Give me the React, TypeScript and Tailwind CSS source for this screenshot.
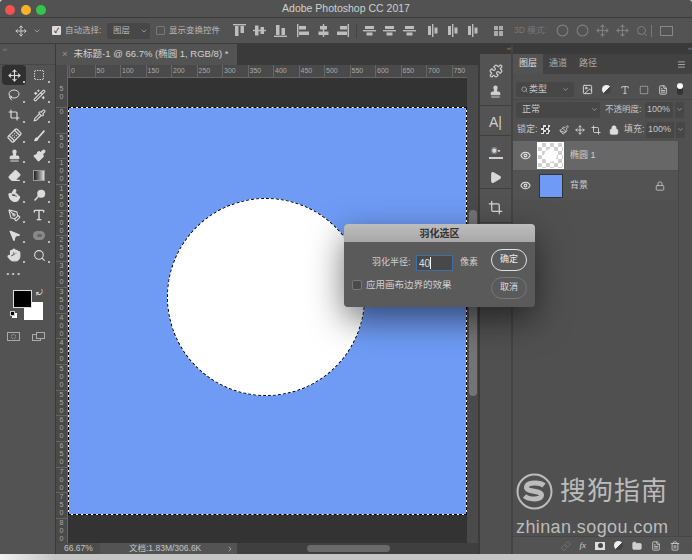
import {
  Bandage, ChevronDown, ChevronRight, Circle, Crop, Eraser, Eye, FileText, Folder, Hand, Image, Lasso, Link,
  Lock, Menu, MousePointer2, Move, Paintbrush, PenTool, Pipette, Play, Pointer, Puzzle, Search, SquareDashed, Stamp, Trash2, Type, Wand2,
} from 'lucide-react'
import type { ReactNode } from 'react'

const hTicks = ['0', '50', '100', '150', '200', '250', '300', '350', '400', '450', '500', '550', '600', '650', '700', '750']
const vTicks = ['0', '50', '100', '150', '200', '250', '300', '350', '400', '450', '500', '550', '600', '650', '700', '750', '800']

function AlignIcon({ kind, rotate, className = '' }: { kind: 'top' | 'mid' | 'bottom' | 'dist'; rotate?: boolean; className?: string }) {
  return (
    <svg width="13" height="13" viewBox="0 0 13 13" fill="#bdbdbd" className={`shrink-0 ${rotate ? '-rotate-90' : ''} ${className}`}>
      {kind === 'top' && (
        <>
          <rect x="0" y="0" width="13" height="1.4" />
          <rect x="2" y="2" width="3.5" height="10" />
          <rect x="7.5" y="2" width="3.5" height="7" />
        </>
      )}
      {kind === 'mid' && (
        <>
          <rect x="0" y="5.8" width="13" height="1.4" />
          <rect x="2" y="1.5" width="3.5" height="10" />
          <rect x="7.5" y="3" width="3.5" height="7" />
        </>
      )}
      {kind === 'bottom' && (
        <>
          <rect x="0" y="11.6" width="13" height="1.4" />
          <rect x="2" y="1" width="3.5" height="10" />
          <rect x="7.5" y="4" width="3.5" height="7" />
        </>
      )}
      {kind === 'dist' && (
        <>
          <rect x="0" y="6" width="13" height="1.4" />
          <rect x="2" y="2" width="9" height="3" />
          <rect x="3.5" y="8.5" width="6" height="3" />
        </>
      )}
    </svg>
  )
}

function Tool({ children, active }: { children: ReactNode; active?: boolean }) {
  return (
    <div className={`relative flex h-[20px] w-[24px] items-center justify-center ${active ? 'rounded-sm bg-[#303030]' : ''}`}>
      {children}
      <span className="absolute right-[1px] bottom-[2px] h-[2px] w-[2px] bg-[#bbb]" />
    </div>
  )
}

function BrushGlyph() {
  return (
    <svg width="13" height="13" viewBox="0 0 13 13" fill="#dcdcdc">
      <path d="M1 12 C1.5 9.5 3 8 4.5 8.2 L10.8 1 L12 2.2 L5.6 9.4 C5.6 11 3.5 12.6 1 12Z" />
    </svg>
  )
}

function DodgeGlyph() {
  return (
    <svg width="13" height="13" viewBox="0 0 13 13" fill="#dcdcdc">
      <circle cx="8.2" cy="4.8" r="4" />
      <path d="M5.4 7.2 L1.6 11.6" stroke="#dcdcdc" strokeWidth="1.6" />
    </svg>
  )
}

function Toggle() {
  return <span className="h-[9px] w-[9px] shrink-0 rounded-full bg-gradient-to-br from-[#eee] from-50% to-[#444] to-50%" />
}

function LayerRow({ name, selected, blue }: { name: string; selected?: boolean; blue?: boolean }) {
  return (
    <div className={`mb-[1px] flex h-[29px] items-center ${selected ? 'bg-[#676767]' : 'bg-[#535353]'}`}>
      <div className="flex w-[24px] shrink-0 justify-center">
        <Eye size={11} className="text-[#e0e0e0]" strokeWidth={2.4} />
      </div>
      {blue ? (
        <div className="mr-[7px] ml-[2px] h-[24px] w-[24px] border border-[#333] bg-[#6f9bf5]" />
      ) : (
        <div className="mr-[6px] flex h-[27px] w-[27px] items-center justify-center border border-white bg-[repeating-conic-gradient(#cfcfcf_0_25%,#fff_0_50%)] bg-[length:8px_8px]">
          <div className="h-[13px] w-[13px] rounded-full bg-white" />
        </div>
      )}
      <span className="flex-1 text-[9px] text-[#cfcfcf]">{name}</span>
      {blue && <Lock size={10} className="mr-[13px] text-[#c8c8c8]" />}
    </div>
  )
}

export default function App() {
  return (
    <div className="relative flex h-[560px] w-[692px] flex-col overflow-hidden bg-[#cfcfcf] font-['Liberation_Sans','Noto_Sans_CJK_SC',sans-serif]">
      <div className="flex h-[554px] shrink-0 flex-col overflow-hidden rounded-t-[4px] bg-[#535353]">
        {/* title bar */}
        <div className="relative flex h-[18px] shrink-0 items-center justify-center border-b border-[#3a3a3a] bg-[#525252] text-[10.5px] text-[#d0d0d0]">
          <div className="absolute top-[5px] left-[5px] flex gap-[5.5px]">
            <span className="h-[10px] w-[10px] rounded-full bg-[#f0524f]" />
            <span className="h-[10px] w-[10px] rounded-full bg-[#f5b32a]" />
            <span className="h-[10px] w-[10px] rounded-full bg-[#33c648]" />
          </div>
          Adobe Photoshop CC 2017
        </div>

        {/* options bar */}
        <div className="flex h-[26px] shrink-0 items-center border-b border-[#3c3c3c] bg-[#535353] pl-[15px] text-[8.5px] text-[#b9b9b9]">
          <Move size={12} className="text-[#c8c8c8]" />
          <ChevronDown size={8} className="ml-[6px]" />
          <span className="ml-[11px] flex h-[9px] w-[9px] items-center justify-center rounded-[1px] bg-[#dcdcdc] text-[7px] leading-none font-bold text-[#333]">✓</span>
          <span className="ml-[4px] w-[41px] shrink-0 whitespace-nowrap">自动选择:</span>
          <div className="ml-[1px] flex h-[16px] w-[43px] shrink-0 items-center justify-between rounded-[2px] bg-[#474747] pr-[2px] pl-[6px]">
            图层
            <ChevronDown size={8} />
          </div>
          <span className="ml-[6px] h-[9px] w-[9px] shrink-0 rounded-[1px] border border-[#777]" />
          <span className="ml-[4px] w-[54px] shrink-0 whitespace-nowrap">显示变换控件</span>
          <div className="ml-[10px] flex items-center">
            <AlignIcon kind="top" />
            <AlignIcon kind="mid" className="ml-[7px]" />
            <AlignIcon kind="bottom" className="ml-[8px]" />
            <AlignIcon kind="top" rotate className="ml-[10px]" />
            <AlignIcon kind="mid" rotate className="ml-[7px]" />
            <AlignIcon kind="bottom" rotate className="ml-[6px]" />
            <span className="ml-[7px] h-[14px] w-px bg-[#444]" />
            <AlignIcon kind="dist" className="ml-[6px]" />
            <AlignIcon kind="dist" className="ml-[7px]" />
            <AlignIcon kind="dist" className="ml-[7px]" />
            <AlignIcon kind="dist" rotate className="ml-[10px]" />
            <AlignIcon kind="dist" rotate className="ml-[7px]" />
            <AlignIcon kind="dist" rotate className="ml-[7px]" />
            <span className="ml-[15px] grid h-[10px] w-[9px] grid-cols-2 gap-[1px]">
              <i className="bg-[#aaa]" /><i className="bg-[#aaa]" /><i className="bg-[#aaa]" /><i className="bg-[#aaa]" />
            </span>
          </div>
          <span className="ml-[11px] shrink-0 text-[#777]">3D 模式:</span>
          <div className="ml-[9px] flex items-center gap-[7px] text-[#808080]">
            <Circle size={13} />
            <Circle size={13} />
            <Move size={13} />
            <Move size={13} />
            <Search size={12} />
          </div>
          <span className="ml-[3px] h-[12px] w-px bg-[#777]" />
          <span className="ml-[8px] h-[10px] w-[13px] shrink-0 border border-[#888]" />
        </div>

        <div className="flex min-h-0 flex-1">
          {/* toolbar */}
          <div className="flex w-[56px] shrink-0 flex-col border-r border-[#3a3a3a] bg-[#535353]">
            <div className="h-[21px] border-b border-[#474747] pt-[1px] pl-[3px] text-[6px] text-[#999]">‹‹</div>
            <div className="ml-[2px] grid grid-cols-[24px_24px] gap-x-[1px] text-[#dcdcdc]">
              <Tool active><Move size={13} /></Tool>
              <Tool><SquareDashed size={12} /></Tool>
              <Tool><Lasso size={12} /></Tool>
              <Tool><Wand2 size={13} /></Tool>
              <Tool><Crop size={12} strokeWidth={2.4} /></Tool>
              <Tool><Pipette size={13} /></Tool>
              <Tool><Bandage size={15} className="-rotate-45" /></Tool>
              <Tool><BrushGlyph /></Tool>
              <Tool><Stamp size={13} fill="#dcdcdc" /></Tool>
              <Tool><Paintbrush size={13} fill="#dcdcdc" /></Tool>
              <Tool><Eraser size={13} fill="#dcdcdc" /></Tool>
              <Tool><span className="h-[11px] w-[12px] border border-[#999] bg-gradient-to-r from-[#222] to-[#ddd]" /></Tool>
              <Tool><Pointer size={13} fill="#dcdcdc" className="rotate-[30deg]" /></Tool>
              <Tool><DodgeGlyph /></Tool>
              <Tool><PenTool size={13} /></Tool>
              <Tool><Type size={14} strokeWidth={2.4} /></Tool>
              <Tool><MousePointer2 size={13} fill="#dcdcdc" /></Tool>
              <Tool><span className="flex h-[9px] w-[12px] items-center justify-center rounded-full bg-[#8a8a8a]"><i className="h-[3px] w-[5px] rounded-full bg-[#666]" /></span></Tool>
              <Tool><Hand size={14} fill="#dcdcdc" /></Tool>
              <Tool><Search size={13} /></Tool>
            </div>
            <div className="-mt-[2px] ml-[6px] flex h-[20px] items-center text-[13px] leading-none font-bold tracking-[1px] text-[#ccc]">···</div>
            <div className="relative mt-[7px] ml-[13px] h-[30px] w-[30px]">
              <div className="absolute right-0 bottom-0 h-[18px] w-[19px] bg-white" />
              <div className="absolute top-0 left-0 h-[18px] w-[19px] border border-[#ddd] bg-black" />
              <span className="absolute top-[-3px] right-[0px] text-[8px] text-[#ddd]">⤾</span>
              <div className="absolute bottom-[2px] left-[-1px] h-[5px] w-[5px] bg-white" />
              <div className="absolute bottom-[4px] left-[-3px] h-[5px] w-[5px] border border-[#ccc] bg-black" />
            </div>
            <div className="mt-[12px] ml-[7px] flex items-center gap-[12px]">
              <div className="flex h-[9px] w-[13px] items-center justify-center border border-[#aaa]">
                <span className="h-[5px] w-[5px] rounded-full border border-dotted border-[#aaa]" />
              </div>
              <div className="relative h-[9px] w-[13px]">
                <span className="absolute top-[2px] left-0 h-[7px] w-[9px] border border-[#aaa]" />
                <span className="absolute top-0 right-0 h-[7px] w-[9px] border border-[#aaa] bg-[#535353]" />
              </div>
            </div>
          </div>

          {/* document column */}
          <div className="flex w-[424px] shrink-0 flex-col border-r-2 border-[#3a3a3a] bg-[#3b3b3b]">
            <div className="flex h-[21px] shrink-0 items-end bg-[#3a3a3a]">
              <div className="flex h-[21px] w-[181px] items-center bg-[#535353] pl-[6px] text-[9.5px] whitespace-nowrap text-[#d0d0d0]">
                <span className="mr-[6px] text-[#999]">×</span>
                未标题-1 @ 66.7% (椭圆 1, RGB/8) *
              </div>
            </div>
            <div className="flex h-[13px] shrink-0 bg-[#4a4a4a]">
              <div className="w-[12px] shrink-0 border-r border-[#666]" />
              <div className="flex w-[399px] overflow-hidden border-b border-[#666] pl-[1px]">
                {hTicks.map((t) => (
                  <span key={t} className="w-[25.5px] shrink-0 border-l border-[#666] pl-[1px] text-[7px] leading-[12px] text-[#a9a9a9]">{t}</span>
                ))}
              </div>
              <div className="flex-1 bg-[#4a4a4a]" />
            </div>

            <div className="flex min-h-0 flex-1">
              <div className="flex w-[12px] shrink-0 flex-col overflow-hidden border-r border-[#666] bg-[#4a4a4a]">
                <div className="flex h-[29px] shrink-0 flex-col items-center justify-center text-[7px] leading-[8px] text-[#a9a9a9]">
                  <span>5</span><span>0</span>
                </div>
                {vTicks.map((t) => (
                  <div key={t} className="flex h-[25.7px] shrink-0 flex-col items-center border-t border-[#666] text-[7px] leading-[8px] text-[#a9a9a9]">
                    {t.split('').map((c, i) => <span key={i}>{c}</span>)}
                  </div>
                ))}
              </div>
              <div className="relative flex w-[399px] flex-col bg-[#333] pt-[29px]">
                <div className="relative h-[408px] border border-dashed border-black bg-white">
                  <div className="h-full w-full bg-[#6f9bf5]" />
                  <div className="absolute top-[90px] left-[98px] h-[198px] w-[198px] rounded-full border border-dashed border-black bg-white" />
                </div>
              </div>
              <div className="flex flex-1 justify-center bg-[#4a4a4a] pt-[132px]">
                <div className="h-[186px] w-[8px] rounded-full bg-[#747474]" />
              </div>
            </div>

            <div className="flex h-[11px] shrink-0 items-center bg-[#535353] text-[8.5px] text-[#c4c4c4]">
              <span className="w-[44px] shrink-0 bg-[#4c4c4c] pl-[8px] leading-[11px]">66.67%</span>
              <span className="w-[129px] shrink-0 pl-[29px]">文档:1.83M/306.6K</span>
              <ChevronRight size={8} className="-ml-[3px] shrink-0" />
              <div className="ml-[3px] flex h-full flex-1 items-center bg-[#3f3f3f] pl-[70px]">
                <div className="h-[7px] w-[83px] rounded-full bg-[#6a6a6a]" />
              </div>
            </div>
          </div>

          {/* icon dock */}
          <div className="flex w-[33px] shrink-0 flex-col border-r-2 border-[#444] bg-[#505050]">
            <div className="h-[10px] shrink-0 bg-[#3a3a3a] text-right text-[6px] leading-[9px] text-[#999]">‹‹ </div>
            <div className="flex h-[51px] shrink-0 flex-col items-center gap-[7px] bg-[#535353] pt-[10px] text-[#d0d0d0]">
              <Puzzle size={14} />
              <Stamp size={13} fill="#d0d0d0" />
            </div>
            <div className="flex h-[31px] shrink-0 items-center justify-center border-y border-[#3f3f3f] bg-[#535353] pt-[4px] text-[14px] text-[#cfcfcf]">A|</div>
            <div className="flex h-[52px] shrink-0 flex-col items-center gap-[12px] bg-[#535353] pt-[10px] text-[#d8d8d8]">
              <span className="h-[13px] w-[14px] border-b-2 border-[#d0d0d0] text-center text-[7px] leading-[9px]">◉▪</span>
              <Play size={13} fill="#d8d8d8" />
            </div>
            <div className="flex h-[35px] shrink-0 items-center justify-center border-y border-[#3f3f3f] bg-[#535353] pt-[3px] text-[#d8d8d8]">
              <Crop size={15} />
            </div>
          </div>

          {/* layers panel */}
          <div className="relative flex min-w-0 flex-1 flex-col bg-[#505050] text-[9px] text-[#c6c6c6]">
            <div className="h-[10px] shrink-0 bg-[#3a3a3a] text-right text-[6px] leading-[9px] text-[#999]">›› </div>
            <div className="flex h-[20px] shrink-0 items-center bg-[#424242] pr-[6px]">
              <span className="flex h-full w-[30px] items-center justify-center bg-[#535353] text-[#e0e0e0]">图层</span>
              <span className="w-[30px] text-center text-[#aaa]">通道</span>
              <span className="w-[30px] text-center text-[#aaa]">路径</span>
              <Menu size={9} className="ml-auto" />
            </div>
            <div className="flex h-[25px] shrink-0 items-start pt-[8px] pl-[3px]">
              <div className="flex h-[15px] w-[58px] shrink-0 items-center justify-between rounded-[2px] bg-[#474747] px-[5px]">
                <span className="flex items-center gap-[1px]"><Search size={7} />类型</span>
                <ChevronDown size={7} />
              </div>
              <div className="mt-[2px] ml-[8px] flex items-center gap-[9px] text-[#ddd]">
                <Image size={11} />
                <Toggle />
                <Type size={10} />
                <SquareDashed size={10} />
                <FileText size={10} />
              </div>
              <span className="mt-[1px] ml-[9px] h-[12px] w-[6px] rounded-full bg-[#333]"><i className="block h-[6px] w-[6px] rounded-full bg-white" /></span>
            </div>
            <div className="flex h-[20px] shrink-0 items-center border-t border-[#474747] pl-[3px]">
              <div className="flex h-[16px] w-[84px] shrink-0 items-center justify-between rounded-[2px] bg-[#474747] pr-[2px] pl-[6px]">
                正常
                <ChevronDown size={7} />
              </div>
              <span className="ml-[5px] w-[38px] shrink-0 text-[8.5px] whitespace-nowrap">不透明度:</span>
              <span className="ml-[2px] flex h-[16px] w-[28px] shrink-0 items-center rounded-l-[2px] bg-[#474747] pl-[2px]">100%</span>
              <span className="ml-[2px] flex h-[16px] w-[9px] shrink-0 items-center justify-center bg-[#474747]"><ChevronDown size={7} /></span>
            </div>
            <div className="flex h-[21px] shrink-0 items-center pl-[4px] text-[9px]">
              <span className="w-[21px] shrink-0 whitespace-nowrap">锁定:</span>
              <div className="ml-[3px] flex items-center text-[#ddd]">
                <span className="h-[9px] w-[9px] bg-[repeating-conic-gradient(#ddd_0_25%,#444_0_50%)] bg-[length:5px_5px]" />
                <Paintbrush size={10} className="ml-[9px]" />
                <Move size={10} className="ml-[6px]" />
                <Crop size={10} className="ml-[6px]" />
                <Lock size={10} fill="#ddd" className="ml-[8px]" />
              </div>
              <span className="ml-[5px] w-[21px] shrink-0 whitespace-nowrap">填充:</span>
              <span className="ml-[1px] flex h-[16px] w-[28px] shrink-0 items-center rounded-l-[2px] bg-[#474747] pl-[2px]">100%</span>
              <span className="ml-[2px] flex h-[16px] w-[9px] shrink-0 items-center justify-center bg-[#474747]"><ChevronDown size={7} /></span>
            </div>
            <div className="flex min-h-0 flex-1 pt-[1px]">
              <div className="w-[165px] shrink-0">
                <LayerRow name="椭圆 1" selected />
                <LayerRow name="背景" blue />
              </div>
              <div className="flex-1 border-l border-[#474747]" />
            </div>
            <div className="flex h-[18px] shrink-0 items-center justify-end gap-[9px] border-t border-[#474747] bg-[#535353] pr-[12px] text-[#d0d0d0]">
              <Link size={10} className="text-[#777]" />
              <span className="font-['Liberation_Serif',serif] italic">fx</span>
              <span className="flex h-[8px] w-[10px] items-center justify-center bg-[#ddd]"><i className="h-[5px] w-[5px] rounded-full bg-[#444]" /></span>
              <Toggle />
              <Folder size={10} fill="#d0d0d0" />
              <FileText size={10} />
              <Trash2 size={10} />
            </div>
          </div>
        </div>
      </div>

      {/* desktop strip under the window */}
      <div className="flex-1 bg-gradient-to-r from-[#f2f2f2] via-[#c6c6c6] via-[8%] to-[#c6c6c6]" />

      {/* feather selection dialog */}
      <div className="absolute top-[224px] left-[344px] flex h-[83px] w-[191px] flex-col overflow-hidden rounded-[4px] bg-[#5a5a5a] text-[9px] text-[#cfcfcf] shadow-[0_12px_34px_rgba(0,0,0,0.55)]">
        <div className="flex h-[18px] shrink-0 items-center justify-center bg-gradient-to-b from-[#bdbdbd] to-[#a8a8a8] text-[10px] font-bold text-[#333]">羽化选区</div>
        <div className="flex flex-1">
          <div className="flex-1 pt-[13px] pl-[8px]">
            <div className="flex items-center pl-[20px]">
              <span className="w-[42px] shrink-0 whitespace-nowrap">羽化半径:</span>
              <span className="ml-[2px] flex h-[16px] w-[37px] shrink-0 items-center border border-[#3e6ea8] bg-[#484848] pl-[2px] text-[10px] text-[#e0e0e0]">40<i className="h-[12px] w-px bg-white" /></span>
              <span className="ml-[7px] shrink-0">像素</span>
            </div>
            <div className="mt-[7px] flex items-center">
              <span className="h-[10px] w-[10px] shrink-0 rounded-[2px] border border-[#777] bg-[#4a4a4a]" />
              <span className="ml-[4px] text-[9.5px] whitespace-nowrap">应用画布边界的效果</span>
            </div>
          </div>
          <div className="flex w-[44px] shrink-0 flex-col items-start gap-[6px] pt-[7px]">
            <span className="flex h-[22px] w-[36px] items-center justify-center rounded-full border border-[#e0e0e0] text-[#eee]">确定</span>
            <span className="flex h-[22px] w-[36px] items-center justify-center rounded-full border border-[#777] text-[#ddd]">取消</span>
          </div>
        </div>
      </div>

      {/* sogou watermark */}
      <div className="absolute top-[473px] left-[516px] text-[#bcbcbc]">
        <div className="flex items-center">
          <svg width="37" height="37" viewBox="0 0 37 37" fill="none">
            <circle cx="18.5" cy="18.5" r="17" stroke="#bcbcbc" strokeWidth="2" />
            <path d="M28 12.5 C24 9 11 9 10.5 14 C10 19.5 26 17 25.5 22.5 C25 27 13 27 8.5 23" stroke="#bcbcbc" strokeWidth="5" />
          </svg>
          <span className="ml-[7px] text-[26px] leading-[37px] tracking-[1px]">搜狗指南</span>
        </div>
        <div className="mt-[8px] text-[18px] leading-[18px] tracking-[0.4px]">zhinan.sogou.com</div>
      </div>
    </div>
  )
}
